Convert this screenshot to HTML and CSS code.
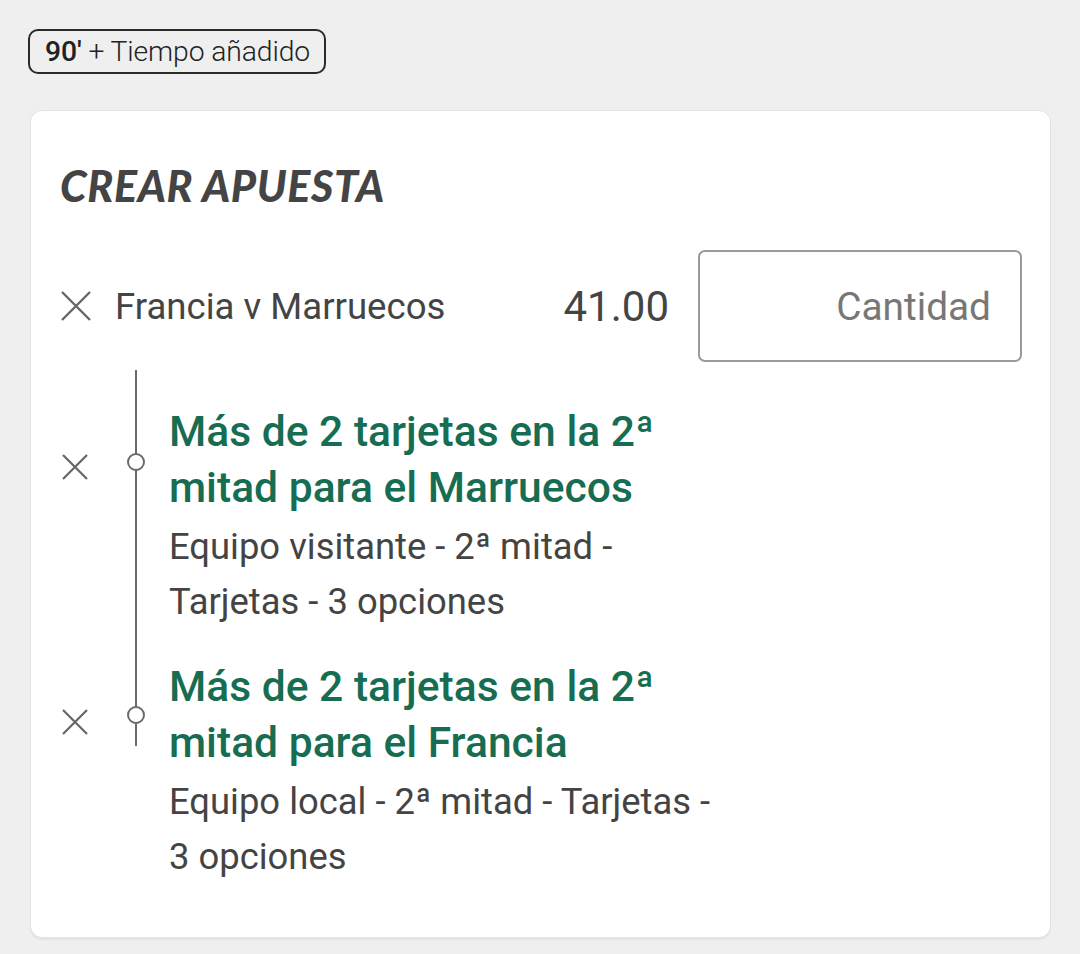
FILE: index.html
```html
<!DOCTYPE html>
<html lang="es">
<head>
<meta charset="utf-8">
<title>Crear apuesta</title>
<link rel="stylesheet" href="styles.css">
</head>
<body>
<div class="page">
  <div class="badge"><strong>90'</strong> + Tiempo añadido</div>

  <section class="card">
    <h1 class="title">CREAR APUESTA</h1>

    <div class="event-row">
      <span class="remove remove-lg">
        <svg viewBox="0 0 32 32" width="32" height="32"><path d="M2 2 L30 30 M30 2 L2 30" stroke="#666" stroke-width="2.4" fill="none"/></svg>
      </span>
      <span class="event-name">Francia v Marruecos</span>
      <span class="odds">41.00</span>
      <div class="stake">Cantidad</div>
    </div>

    <div class="legs">
      <div class="leg leg-first">
        <span class="remove remove-sm">
          <svg viewBox="0 0 26 26" width="26" height="26"><path d="M1 1 L25 25 M25 1 L1 25" stroke="#666" stroke-width="2.2" fill="none"/></svg>
        </span>
        <span class="marker"><span class="dot"></span></span>
        <div class="leg-body">
          <div class="leg-title">Más de 2 tarjetas en la 2ª mitad para el Marruecos</div>
          <div class="leg-sub">Equipo visitante - 2ª mitad - Tarjetas - 3 opciones</div>
        </div>
      </div>
      <div class="leg leg-last">
        <span class="remove remove-sm">
          <svg viewBox="0 0 26 26" width="26" height="26"><path d="M1 1 L25 25 M25 1 L1 25" stroke="#666" stroke-width="2.2" fill="none"/></svg>
        </span>
        <span class="marker"><span class="dot"></span></span>
        <div class="leg-body">
          <div class="leg-title">Más de 2 tarjetas en la 2ª mitad para el Francia</div>
          <div class="leg-sub">Equipo local - 2ª mitad - Tarjetas - 3 opciones</div>
        </div>
      </div>
    </div>
  </section>
</div>
</body>
</html>
```

FILE: styles.css
```css
html, body {
  margin: 0;
  padding: 0;
  background: #efefef;
}
body {
  font-family: Roboto, "Liberation Sans", sans-serif;
  color: #444;
  width: 1080px;
  height: 954px;
  overflow: hidden;
}
.page {
  padding: 29px 29px 0 28px;
}
.badge {
  display: inline-flex;
  align-items: center;
  height: 41px;
  padding: 0 14px 0 15px;
  border: 2px solid #2a2a2a;
  border-radius: 10px;
  font-size: 28.3px;
  font-weight: 300;
  color: #222;
  letter-spacing: -0.1px;
  white-space: pre;
}
.badge strong {
  font-weight: 500;
}
.card {
  margin: 36px 0 0 2px;
  width: 1021px;
  box-sizing: border-box;
  height: 828px;
  background: #fff;
  border: 1px solid #e3e3e3;
  border-radius: 12px;
  box-shadow: 0 2px 0 #e4e4e4;
  padding: 0 28px 0 29px;
}
.title {
  margin: 0;
  padding-top: 53px;
  font-family: Lato, "DejaVu Sans", sans-serif;
  font-weight: 900;
  font-style: italic;
  font-size: 43px;
  line-height: 44px;
  color: #444;
  letter-spacing: 0.65px;
}
.event-row {
  display: flex;
  align-items: center;
  margin-top: 42px;
  height: 112px;
}
.remove {
  display: flex;
  align-items: center;
  justify-content: center;
}
.remove-lg {
  width: 32px;
  margin-right: 23px;
}
.event-name {
  flex: 1;
  font-size: 36.6px;
  color: #444;
}
.odds {
  font-size: 42px;
  color: #444;
  margin-right: 29px;
}
.stake {
  width: 324px;
  height: 112px;
  box-sizing: border-box;
  border: 2px solid #9a9a9a;
  border-radius: 7px;
  display: flex;
  align-items: center;
  justify-content: flex-end;
  padding-right: 29px;
  font-size: 38.8px;
  color: #777;
}
.legs {
  margin-top: 12px;
}
.leg {
  display: flex;
  padding-top: 29px;
}
.remove-sm {
  width: 30px;
  height: 26px;
  margin-top: 51px;
  margin-right: 29px;
  justify-content: flex-start;
  padding-left: 2px;
}
.marker {
  position: relative;
  width: 30px;
  flex: none;
  margin-top: -33px;
}
.marker::before {
  content: "";
  position: absolute;
  left: 14px;
  top: 0;
  bottom: 0;
  width: 2px;
  background: #6a6a6a;
}
.leg-last .marker::before {
  bottom: auto;
  height: 121px;
}
.dot {
  position: absolute;
  left: 6px;
  top: 83px;
  width: 14px;
  height: 14px;
  border: 2px solid #6a6a6a;
  border-radius: 50%;
  background: #fff;
}
.leg-last .dot {
  top: 81px;
}
.leg-body {
  margin-left: 18px;
  width: 555px;
}
.leg-title {
  font-size: 42.6px;
  line-height: 56px;
  font-weight: 500;
  color: #176d52;
}
.leg-sub {
  margin-top: 4px;
  font-size: 36.4px;
  line-height: 55px;
  color: #444;
}
```
